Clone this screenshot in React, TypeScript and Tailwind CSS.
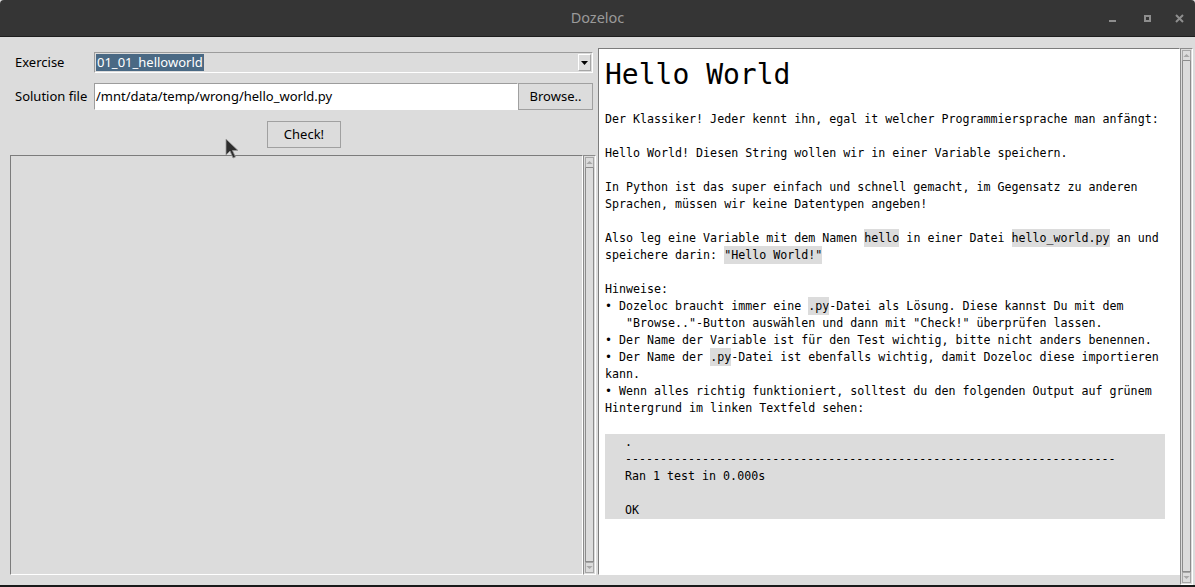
import React from "react";

const mono = { fontFamily: '"DejaVu Sans Mono", "Liberation Mono", monospace' };
const sans = { fontFamily: '"Noto Sans", "Open Sans", sans-serif' };

function Tri({ up }: { up: boolean }) {
  return (
    <svg width="9" height="5" viewBox="0 0 9 5">
      {up ? <path d="M0.5 4.5 L4.5 0.5 L8.5 4.5 Z" fill="#a8a8a8" /> : <path d="M0.5 0.5 L8.5 0.5 L4.5 4.5 Z" fill="#a8a8a8" />}
    </svg>
  );
}

function Scrollbar() {
  return (
    <div className="w-[13px] h-full flex flex-col border-l border-t border-[#8c8c8c] border-r border-b border-r-[#ffffff] border-b-[#ffffff] bg-[#dcdcdc]">
      <div className="h-[11px] mx-[1px] mt-[1px] flex items-center justify-center border border-[#a6a6a6] border-b-[#8c8c8c]">
        <Tri up />
      </div>
      <div className="flex-1 mx-[1px] border-l border-r border-[#8c8c8c] border-b border-b-[#8c8c8c]" />
      <div className="h-[11px] mx-[1px] mb-[1px] flex items-center justify-center border border-[#a6a6a6]">
        <Tri up={false} />
      </div>
    </div>
  );
}

function Code({ children }: { children: React.ReactNode }) {
  return <span className="bg-[#dcdcdc] py-[2px]">{children}</span>;
}

function L({ children }: { children?: React.ReactNode }) {
  return <div className="h-[17px] leading-[17px] whitespace-pre">{children ?? " "}</div>;
}

export default function App() {
  return (
    <div className="w-[1195px] h-[587px] flex flex-col bg-[#dcdcdc] overflow-hidden relative">
      {/* Title bar */}
      <div className="h-[37px] bg-[#353535] rounded-t-[4px] flex items-center relative border-b border-[#1e1e1e]">
        <div className="flex-1 text-center text-[14.5px] text-[#9a9a9a]" style={sans}>Dozeloc</div>
        <div className="absolute right-[1px] top-0 h-[36px] flex items-center">
          <div className="w-[36px] h-[36px] flex items-center justify-center">
            <div className="w-[7px] h-[2px] bg-[#8e8e8e] mt-[6px]" />
          </div>
          <div className="w-[34px] h-[36px] flex items-center justify-center">
            <div className="w-[7px] h-[7px] border-2 border-[#8e8e8e]" />
          </div>
          <div className="w-[30px] h-[36px] flex items-center justify-center">
            <svg width="9" height="9" viewBox="0 0 9 9">
              <path d="M1 1 L8 8 M8 1 L1 8" stroke="#8e8e8e" strokeWidth="2" />
            </svg>
          </div>
        </div>
      </div>

      {/* Body */}
      <div className="flex-1 flex bg-[#dcdcdc] text-[13px] text-black" style={sans}>
        {/* Left column */}
        <div className="w-[598px] flex flex-col">
          <div className="mt-[15px] h-[21px] flex items-center">
            <div className="w-[94px] pl-[15px]">Exercise</div>
            <div className="w-[499px] h-[21px] flex items-center border border-[#9c9c9c] border-b-white border-r-white bg-[#dcdcdc]">
              <span className="ml-[1px] h-[17px] leading-[17px] px-[1px] bg-[#4a6984] text-white">01_01_helloworld</span>
              <div className="flex-1" />
              <div className="w-[13px] h-[17px] mr-[1px] flex items-center justify-center border border-[#a6a6a6] border-t-white border-l-white bg-[#dcdcdc]">
                <svg width="7" height="4" viewBox="0 0 7 4"><path d="M0 0 L7 0 L3.5 4 Z" fill="#000" /></svg>
              </div>
            </div>
          </div>
          <div className="mt-[10px] h-[27px] flex items-center">
            <div className="w-[94px] pl-[15px]">Solution file</div>
            <div className="w-[424px] h-[27px] flex items-center bg-white border border-[#9c9c9c] border-b-white border-r-white pl-[1px]">
              /mnt/data/temp/wrong/hello_world.py
            </div>
            <div className="w-[75px] h-[27px] flex items-center justify-center border border-[#a0a0a0] bg-[#dcdcdc]">Browse..</div>
          </div>
          <div className="mt-[11px] h-[27px] flex justify-center pl-[10px]">
            <div className="w-[74px] h-[27px] flex items-center justify-center border border-[#a0a0a0] bg-[#dcdcdc]">Check!</div>
          </div>
          <div className="mt-[7px] h-[420px] flex pl-[10px]">
            <div className="w-[573px] h-full bg-[#dcdcdc] border-l border-t border-[#7c7c7c] border-r border-b border-r-white border-b-white" />
            <Scrollbar />
          </div>
        </div>

        {/* Right column */}
        <div className="flex-1 flex pt-[11px] pr-[2px]">
          <div className="w-[582px] h-[527px] bg-white border-l border-t border-[#7c7c7c] border-r border-b border-r-white border-b-white pl-[6px] pr-[7px] overflow-hidden" style={mono}>
            <div className="mt-[8px] h-[36px] leading-[36px] text-[28px] text-black whitespace-pre">Hello World</div>
            <div className="h-[18px]" />
            <div className="text-[11.65px] text-black">
              <L>Der Klassiker! Jeder kennt ihn, egal it welcher Programmiersprache man anfängt:</L>
              <L />
              <L>Hello World! Diesen String wollen wir in einer Variable speichern.</L>
              <L />
              <L>In Python ist das super einfach und schnell gemacht, im Gegensatz zu anderen</L>
              <L>Sprachen, müssen wir keine Datentypen angeben!</L>
              <L />
              <L>Also leg eine Variable mit dem Namen <Code>hello</Code> in einer Datei <Code>hello_world.py</Code> an und</L>
              <L>speichere darin: <Code>"Hello World!"</Code></L>
              <L />
              <L>Hinweise:</L>
              <L>• Dozeloc braucht immer eine <Code>.py</Code>-Datei als Lösung. Diese kannst Du mit dem</L>
              <L>   "Browse.."-Button auswählen und dann mit "Check!" überprüfen lassen.</L>
              <L>• Der Name der Variable ist für den Test wichtig, bitte nicht anders benennen.</L>
              <L>• Der Name der <Code>.py</Code>-Datei ist ebenfalls wichtig, damit Dozeloc diese importieren</L>
              <L>kann.</L>
              <L>• Wenn alles richtig funktioniert, solltest du den folgenden Output auf grünem</L>
              <L>Hintergrund im linken Textfeld sehen:</L>
              <L />
              <div className="bg-[#dcdcdc] pl-[20px] w-[560px]">
                <L>.</L>
                <L>{"-".repeat(70)}</L>
                <L>Ran 1 test in 0.000s</L>
                <L />
                <L>OK</L>
              </div>
            </div>
          </div>
          <Scrollbar />
        </div>
      </div>
      <div className="h-[2px] bg-[#1a1a1a]" />

      {/* Mouse cursor */}
      <svg className="absolute left-[225px] top-[138px]" width="14" height="22" viewBox="0 0 14 22">
        <path d="M1 1 L1 17 L5 13 L8 20 L10.5 19 L7.5 12.5 L13 12.5 Z" fill="#2e2e2e" stroke="#9a9a9a" strokeWidth="0.8" />
      </svg>
    </div>
  );
}
